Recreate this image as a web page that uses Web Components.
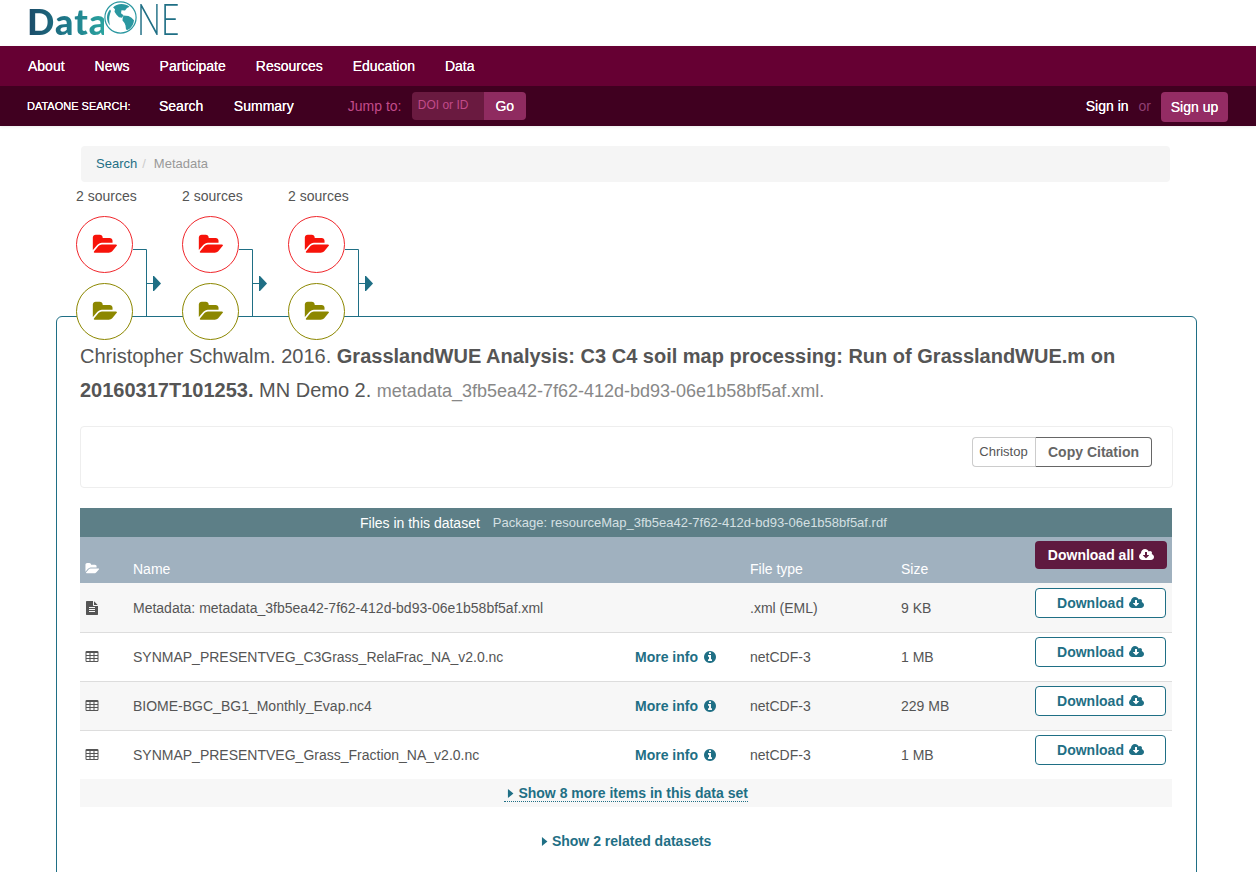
<!DOCTYPE html>
<html lang="en">
<head>
<meta charset="utf-8">
<title>DataONE Metadata</title>
<style>
    html { overflow: hidden; height: 872px; }
    body {
        margin: 0;
        height: 872px;
        overflow: hidden;
        background: #fff;
        color: #555;
        font-family: "Liberation Sans", Arial, sans-serif;
        font-size: 14px;
    }
</style>
</head>
<body>
<d1-header></d1-header>
<d1-nav></d1-nav>
<d1-breadcrumb></d1-breadcrumb>
<d1-provenance>
    <d1-prov-group></d1-prov-group>
    <d1-prov-group></d1-prov-group>
    <d1-prov-group></d1-prov-group>
</d1-provenance>
<d1-card>
    <d1-citation></d1-citation>
    <d1-cite-box></d1-cite-box>
    <d1-file-table>
        <d1-file-row icon="file" name="Metadata: metadata_3fb5ea42-7f62-412d-bd93-06e1b58bf5af.xml" type=".xml (EML)" size="9 KB" shade></d1-file-row>
        <d1-file-row icon="table" name="SYNMAP_PRESENTVEG_C3Grass_RelaFrac_NA_v2.0.nc" info type="netCDF-3" size="1 MB"></d1-file-row>
        <d1-file-row icon="table" name="BIOME-BGC_BG1_Monthly_Evap.nc4" info type="netCDF-3" size="229 MB" shade></d1-file-row>
        <d1-file-row icon="table" name="SYNMAP_PRESENTVEG_Grass_Fraction_NA_v2.0.nc" info type="netCDF-3" size="1 MB"></d1-file-row>
    </d1-file-table>
</d1-card>

<script>
const ICONS = {
    folder: ['0 0 2048 1792', 'M1943 952q0 31-31 66l-336 396q-43 51-120.5 86.5t-143.5 35.5h-1088q-34 0-60.5-13t-26.5-43q0-31 31-66l336-396q43-51 120.5-86.5t143.5-35.5h1088q34 0 60.5 13t26.5 43zm-343-344v160h-832q-94 0-197 47.5t-164 119.5l-337 396-5 6q0-4-.5-12.5t-.5-12.5v-960q0-92 66-158t158-66h320q92 0 158 66t66 158v32h544q92 0 158 66t66 158z'],
    cloud: ['0 0 1920 1792', 'M1280 928q0-14-9-23t-23-9h-224v-352q0-13-9.5-22.5t-22.5-9.5h-192q-13 0-22.5 9.5t-9.5 22.5v352h-224q-13 0-22.5 9.5t-9.5 22.5q0 14 9 23l352 352q9 9 23 9t23-9l351-351q10-12 10-24zm640 224q0 159-112.5 271.5t-271.5 112.5h-1088q-185 0-316.5-131.5t-131.5-316.5q0-130 70-240t188-165q-2-30-2-43 0-212 150-362t362-150q156 0 285.5 87t188.5 231q71-62 166-62 106 0 181 75t75 181q0 76-41 138 130 31 213.5 135.5t83.5 238.5z'],
    info: ['0 0 1792 1792', 'M1152 1376v-160q0-14-9-23t-23-9h-96v-512q0-14-9-23t-23-9h-320q-14 0-23 9t-9 23v160q0 14 9 23t23 9h96v320h-96q-14 0-23 9t-9 23v160q0 14 9 23t23 9h448q14 0 23-9t9-23zm-128-896v-160q0-14-9-23t-23-9h-192q-14 0-23 9t-9 23v160q0 14 9 23t23 9h192q14 0 23-9t9-23zm640 416q0 209-103 385.5t-279.5 279.5-385.5 103-385.5-103-279.5-279.5-103-385.5 103-385.5 279.5-279.5 385.5-103 385.5 103 279.5 279.5 103 385.5z'],
    table: ['0 0 1792 1792', 'M576 1376v-192q0-14-9-23t-23-9h-320q-14 0-23 9t-9 23v192q0 14 9 23t23 9h320q14 0 23-9t9-23zm0-384v-192q0-14-9-23t-23-9h-320q-14 0-23 9t-9 23v192q0 14 9 23t23 9h320q14 0 23-9t9-23zm512 384v-192q0-14-9-23t-23-9h-320q-14 0-23 9t-9 23v192q0 14 9 23t23 9h320q14 0 23-9t9-23zm-512-768v-192q0-14-9-23t-23-9h-320q-14 0-23 9t-9 23v192q0 14 9 23t23 9h320q14 0 23-9t9-23zm512 384v-192q0-14-9-23t-23-9h-320q-14 0-23 9t-9 23v192q0 14 9 23t23 9h320q14 0 23-9t9-23zm512 384v-192q0-14-9-23t-23-9h-320q-14 0-23 9t-9 23v192q0 14 9 23t23 9h320q14 0 23-9t9-23zm-512-768v-192q0-14-9-23t-23-9h-320q-14 0-23 9t-9 23v192q0 14 9 23t23 9h320q14 0 23-9t9-23zm512 384v-192q0-14-9-23t-23-9h-320q-14 0-23 9t-9 23v192q0 14 9 23t23 9h320q14 0 23-9t9-23zm0-384v-192q0-14-9-23t-23-9h-320q-14 0-23 9t-9 23v192q0 14 9 23t23 9h320q14 0 23-9t9-23zm128-320v1088q0 66-47 113t-113 47h-1344q-66 0-113-47t-47-113v-1088q0-66 47-113t113-47h1344q66 0 113 47t47 113z'],
    file: ['0 0 1792 1792', 'M1596 476q14 14 28 36h-472v-472q22 14 36 28zm-476 164h544v1056q0 40-28 68t-68 28h-1344q-40 0-68-28t-28-68v-1600q0-40 28-68t68-28h800v544q0 40 28 68t68 28zm160 736v-64q0-14-9-23t-23-9h-704q-14 0-23 9t-9 23v64q0 14 9 23t23 9h704q14 0 23-9t9-23zm0-256v-64q0-14-9-23t-23-9h-704q-14 0-23 9t-9 23v64q0 14 9 23t23 9h704q14 0 23-9t9-23zm0-256v-64q0-14-9-23t-23-9h-704q-14 0-23 9t-9 23v64q0 14 9 23t23 9h704q14 0 23-9t9-23z'],
    caret: ['0 0 8 12', 'M1 1l6 5-6 5z']
};

function icon(name, size, color) {
    const [box, d] = ICONS[name];
    return `<svg viewBox="${box}" height="${size}" style="display:block;flex:none" aria-hidden="true"><path fill="${color}" d="${d}"/></svg>`;
}

class D1Header extends HTMLElement {
    constructor() {
        super();
        this.attachShadow({ mode: 'open' });
    }

    connectedCallback() {
        this.shadowRoot.innerHTML = `
            <style>
                :host { display: block; height: 46px; padding-left: 27px; }
                .logo { display: flex; align-items: flex-start; height: 46px; }
                .data {
                    font: 900 36px/42px Lato, sans-serif;
                    letter-spacing: 1px;
                    background: linear-gradient(90deg, #1b4a67, #1f7c8c 55%, #2aa39f);
                    -webkit-background-clip: text;
                    background-clip: text;
                    color: transparent;
                    width: 77px;
                }
                svg { margin-top: 1px; flex: none; }
                .ne {
                    font: 300 44px/36px Lato, sans-serif;
                    color: #1f6f85;
                    transform: scaleX(.72);
                    transform-origin: 0 0;
                }
            </style>
            <div class="logo">
                <span class="data">Data</span>
                <svg width="33" height="33" viewBox="0 0 33 33">
                    <circle cx="16.5" cy="16.5" r="15.6" fill="#fff" stroke="#2a97a0" stroke-width="1.2"/>
                    <path fill="#2a97a0" d="M9 6.500C11 4.500 14 3 17.500 3c3 0 6 1 8 2.800l-2.500 1.200-2 2.500-3.500-.3-.5 3 2.500 2-1.500 2.500-3-.5-2.500-2.500-2-3 .5-2.500-1.500-1.500z"/>
                    <path fill="#2a97a0" d="M19.500 14.500l5 .5 3 1.800 2.500 2.500c-.3 3.500-1.800 6.200-4 8.200l-2.500 1.500-1.500-.5-.5-4-1-2.500-2-2.500 .2-2.500z"/>
                    <path fill="#2a97a0" d="M6 8.500C3.800 11 3 13.800 3 16.500c0 3 1.200 6 3 8-1-4-1.200-8 0-11.500l1-3z"/>
                </svg>
                <span class="ne">NE</span>
            </div>
        `;
    }
}

class D1Nav extends HTMLElement {
    constructor() {
        super();
        this.attachShadow({ mode: 'open' });
    }

    connectedCallback() {
        const main = ['About', 'News', 'Participate', 'Resources', 'Education', 'Data'];
        this.shadowRoot.innerHTML = `
            <style>
                :host { display: block; color: #fff; font-size: 14px; box-shadow: 0 1px 3px rgba(0,0,0,.08); }
                a { color: #fff; text-shadow: 0 0 .6px #fff; }
                .top {
                    display: flex;
                    align-items: center;
                    gap: 30px;
                    height: 40px;
                    padding: 0 28px;
                    background: #660033;
                }
                .sub {
                    display: flex;
                    align-items: center;
                    height: 40px;
                    padding: 0 28px 0 27px;
                    background: #400020;
                }
                .label { width: 132px; font-size: 11px; text-shadow: 0 0 .6px #fff; }
                .sub a { margin-right: 30.500px; }
                .jump { margin-left: 23.500px; width: 64px; color: #c24b8a; }
                .field {
                    display: flex;
                    align-items: center;
                    width: 72px;
                    height: 28px;
                    box-sizing: border-box;
                    padding-left: 6px;
                    background: #6a1a40;
                    border-radius: 4px 0 0 4px;
                    color: #c24b8a;
                    font-size: 12px;
                    padding-bottom: 2px;
                }
                .go {
                    display: flex;
                    align-items: center;
                    justify-content: center;
                    width: 42px;
                    height: 28px;
                    background: #8f2b60;
                    border-radius: 0 4px 4px 0;
                    text-shadow: 0 0 .6px #fff;
                }
                .right { margin-left: auto; display: flex; align-items: center; }
                .right a { margin: 0; }
                .or { color: #8f3f72; margin: 0 10px; }
                .signup {
                    display: flex;
                    align-items: center;
                    justify-content: center;
                    width: 67px;
                    height: 30px;
                    margin-top: 2px;
                    background: #942c64;
                    border-radius: 4px;
                    text-shadow: 0 0 .6px #fff;
                }
            </style>
            <div class="top">${main.map(m => `<a>${m}</a>`).join('')}</div>
            <div class="sub">
                <span class="label">DATAONE SEARCH:</span>
                <a>Search</a><a>Summary</a>
                <span class="jump">Jump to:</span>
                <span class="field">DOI or ID</span>
                <span class="go">Go</span>
                <div class="right">
                    <a>Sign in</a><span class="or">or</span><span class="signup">Sign up</span>
                </div>
            </div>
        `;
    }
}

class D1Breadcrumb extends HTMLElement {
    constructor() {
        super();
        this.attachShadow({ mode: 'open' });
    }

    connectedCallback() {
        this.shadowRoot.innerHTML = `
            <style>
                :host {
                    display: flex;
                    align-items: center;
                    height: 36px;
                    width: 1089px;
                    margin: 20px 0 0 81px;
                    padding: 0 0 2px 15px;
                    box-sizing: border-box;
                    background: #f5f5f5;
                    border-radius: 4px;
                    font-size: 13px;
                    color: #999;
                }
                a { color: #1f6f85; }
                i { font-style: normal; color: #ccc; margin: 0 8px 0 5px; }
            </style>
            <a>Search</a><i>/</i><span>Metadata</span>
        `;
    }
}

class D1Provenance extends HTMLElement {
    constructor() {
        super();
        this.attachShadow({ mode: 'open' });
    }

    connectedCallback() {
        this.shadowRoot.innerHTML = `
            <style>
                :host {
                    display: flex;
                    gap: 0;
                    height: 134px;
                    padding-left: 76px;
                    position: relative;
                    z-index: 2;
                }
            </style>
            <slot></slot>
        `;
    }
}

// one column of the provenance chart: label, two source nodes and the connector
class D1ProvGroup extends HTMLElement {
    constructor() {
        super();
        this.attachShadow({ mode: 'open' });
    }

    connectedCallback() {
        this.shadowRoot.innerHTML = `
            <style>
                :host { display: block; position: relative; width: 106px; height: 134px; }
                .label { position: absolute; left: 0; top: 6px; font-size: 14px; line-height: 17px; white-space: nowrap; color: #555; }
                .node {
                    position: absolute;
                    left: 0;
                    width: 57px;
                    height: 57px;
                    box-sizing: border-box;
                    padding-left: 1px;
                    display: flex;
                    align-items: center;
                    justify-content: center;
                    background: #fff;
                    border-radius: 50%;
                    border: 1px solid;
                }
                .a { top: 34px; border-color: #f0262b; }
                .b { top: 101px; border-color: #8c8700; }
                svg.wire { position: absolute; left: 57px; top: 34px; overflow: visible; }
            </style>
            <span class="label">2 sources</span>
            <svg class="wire" width="36" height="100" viewBox="0 0 36 100">
                <path fill="none" stroke="#1f6f85" d="M0 33.500H13.500V100M13.500 67.500H20"/>
                <path fill="#1f6f85" d="M20 60h1l7 7.500-7 7.500h-1z"/>
            </svg>
            <div class="node a">${icon('folder', 23, '#f7130a')}</div>
            <div class="node b">${icon('folder', 23, '#8c8700')}</div>
        `;
    }
}

class D1Card extends HTMLElement {
    constructor() {
        super();
        this.attachShadow({ mode: 'open' });
    }

    connectedCallback() {
        this.shadowRoot.innerHTML = `
            <style>
                :host {
                    display: block;
                    width: 1141px;
                    height: 620px;
                    margin-left: 56px;
                    box-sizing: border-box;
                    padding: 22px 23px 0 23px;
                    border: 1px solid #1f6f85;
                    border-radius: 6px;
                    background: #fff;
                }
            </style>
            <slot></slot>
        `;
    }
}

class D1Citation extends HTMLElement {
    constructor() {
        super();
        this.attachShadow({ mode: 'open' });
    }

    connectedCallback() {
        this.shadowRoot.innerHTML = `
            <style>
                :host { display: block; font-size: 20px; line-height: 34px; color: #555; width: 1060px; }
                b { font-weight: 700; }
                small { font-size: 18px; color: #888; }
            </style>
            Christopher Schwalm. 2016. <b>GrasslandWUE Analysis: C3 C4 soil map processing: Run of GrasslandWUE.m on</b> <b>20160317T101253.</b> MN Demo 2. <small>metadata_3fb5ea42-7f62-412d-bd93-06e1b58bf5af.xml.</small>
        `;
    }
}

class D1CiteBox extends HTMLElement {
    constructor() {
        super();
        this.attachShadow({ mode: 'open' });
    }

    connectedCallback() {
        this.shadowRoot.innerHTML = `
            <style>
                :host {
                    display: flex;
                    justify-content: flex-end;
                    box-sizing: border-box;
                    width: 1093px;
                    height: 62px;
                    margin-top: 18px;
                    padding: 10px 20px 0 0;
                    border: 1px solid #eee;
                    border-radius: 4px;
                }
                .group { display: flex; height: 30px; }
                span { display: flex; align-items: center; justify-content: center; box-sizing: border-box; }
                .who { width: 63px; font-size: 13px; color: #555; border: 1px solid #ccc; border-right: 0; border-radius: 4px 0 0 4px; padding: 0 1px 2px 0; }
                .copy { width: 117px; font-weight: 700; color: #666; border: 1px solid #666; border-left-color: #ccc; border-radius: 0 4px 4px 0; }
            </style>
            <div class="group"><span class="who">Christop</span><span class="copy">Copy Citation</span></div>
        `;
    }
}

class D1FileTable extends HTMLElement {
    constructor() {
        super();
        this.attachShadow({ mode: 'open' });
    }

    connectedCallback() {
        this.shadowRoot.innerHTML = `
            <style>
                :host { display: block; width: 1092px; margin-top: 20px; font-size: 14px; }
                .title {
                    display: flex;
                    align-items: center;
                    height: 29px;
                    padding-left: 280px;
                    background: #5d7f87;
                    color: #fff;
                }
                .title small { margin-left: 13px; font-size: 13px; color: #d5e0e3; }
                .head {
                    display: grid;
                    grid-template-columns: 53px 617px 151px 134px 132px;
                    align-items: end;
                    height: 46px;
                    background: #a0b1bf;
                    color: #fff;
                    padding-bottom: 6px;
                    box-sizing: border-box;
                }
                .head .ic { padding: 0 0 2px 5px; }
                .all {
                    display: flex;
                    align-items: center;
                    justify-content: center;
                    gap: 5px;
                    height: 28px;
                    margin-bottom: 8px;
                    background: #5f1a3f;
                    border-radius: 4px;
                    font-weight: 700;
                }
                .more, .related {
                    display: flex;
                    align-items: center;
                    justify-content: center;
                    color: #1f6f85;
                    font-weight: 700;
                }
                .more { height: 28px; background: #f7f7f7; }
                .more span {
                    display: flex;
                    align-items: center;
                    gap: 4px;
                    margin-top: 2px;
                    border-bottom: 1px dotted #1f6f85;
                    line-height: 15px;
                    padding-left: 3px;
                }
                .related { height: 68px; gap: 4px; }
            </style>
            <div class="title">Files in this dataset<small>Package: resourceMap_3fb5ea42-7f62-412d-bd93-06e1b58bf5af.rdf</small></div>
            <div class="head">
                <div class="ic">${icon('folder', 13, '#fff')}</div>
                <div>Name</div><div>File type</div><div>Size</div>
                <div class="all">Download all ${icon('cloud', 14, '#fff')}</div>
            </div>
            <slot></slot>
            <div class="more"><span>${icon('caret', 11, '#1f6f85')}Show 8 more items in this data set</span></div>
            <div class="related">${icon('caret', 11, '#1f6f85')}Show 2 related datasets</div>
        `;
    }
}

class D1FileRow extends HTMLElement {
    constructor() {
        super();
        this.attachShadow({ mode: 'open' });
    }

    connectedCallback() {
        const more = this.hasAttribute('info')
            ? `<span class="info">More info ${icon('info', 14, '#1f6f85')}</span>`
            : '';
        const iconName = this.getAttribute('icon');
        this.shadowRoot.innerHTML = `
            <style>
                :host {
                    display: grid;
                    grid-template-columns: 53px 502px 115px 151px 134px 132px;
                    align-items: center;
                    height: 49px;
                    box-sizing: border-box;
                    color: #555;
                    background: ${this.hasAttribute('shade') ? '#f7f7f7' : '#fff'};
                    box-shadow: inset 0 1px 0 #ddd;
                }
                :host(:first-child) { box-shadow: none; }
                .ic { padding-left: 5px; }
                .info { display: flex; align-items: center; gap: 5px; color: #1f6f85; font-weight: 700; }
                button {
                    align-self: start;
                    display: flex;
                    align-items: center;
                    justify-content: center;
                    gap: 5px;
                    width: 131px;
                    height: 30px;
                    margin-top: 5px;
                    padding: 0;
                    background: #fff;
                    border: 1px solid #1f6f85;
                    border-radius: 4px;
                    color: #1f6f85;
                    font: 700 14px "Liberation Sans", Arial, sans-serif;
                }
            </style>
            <div class="ic">${icon(iconName, 14, '#555')}</div>
            <div>${this.getAttribute('name')}</div>
            <div>${more}</div>
            <div>${this.getAttribute('type')}</div>
            <div>${this.getAttribute('size')}</div>
            <button>Download ${icon('cloud', 14, '#1f6f85')}</button>
        `;
    }
}

customElements.define('d1-header', D1Header);
customElements.define('d1-nav', D1Nav);
customElements.define('d1-breadcrumb', D1Breadcrumb);
customElements.define('d1-provenance', D1Provenance);
customElements.define('d1-prov-group', D1ProvGroup);
customElements.define('d1-card', D1Card);
customElements.define('d1-citation', D1Citation);
customElements.define('d1-cite-box', D1CiteBox);
customElements.define('d1-file-table', D1FileTable);
customElements.define('d1-file-row', D1FileRow);
</script>
</body>
</html>
